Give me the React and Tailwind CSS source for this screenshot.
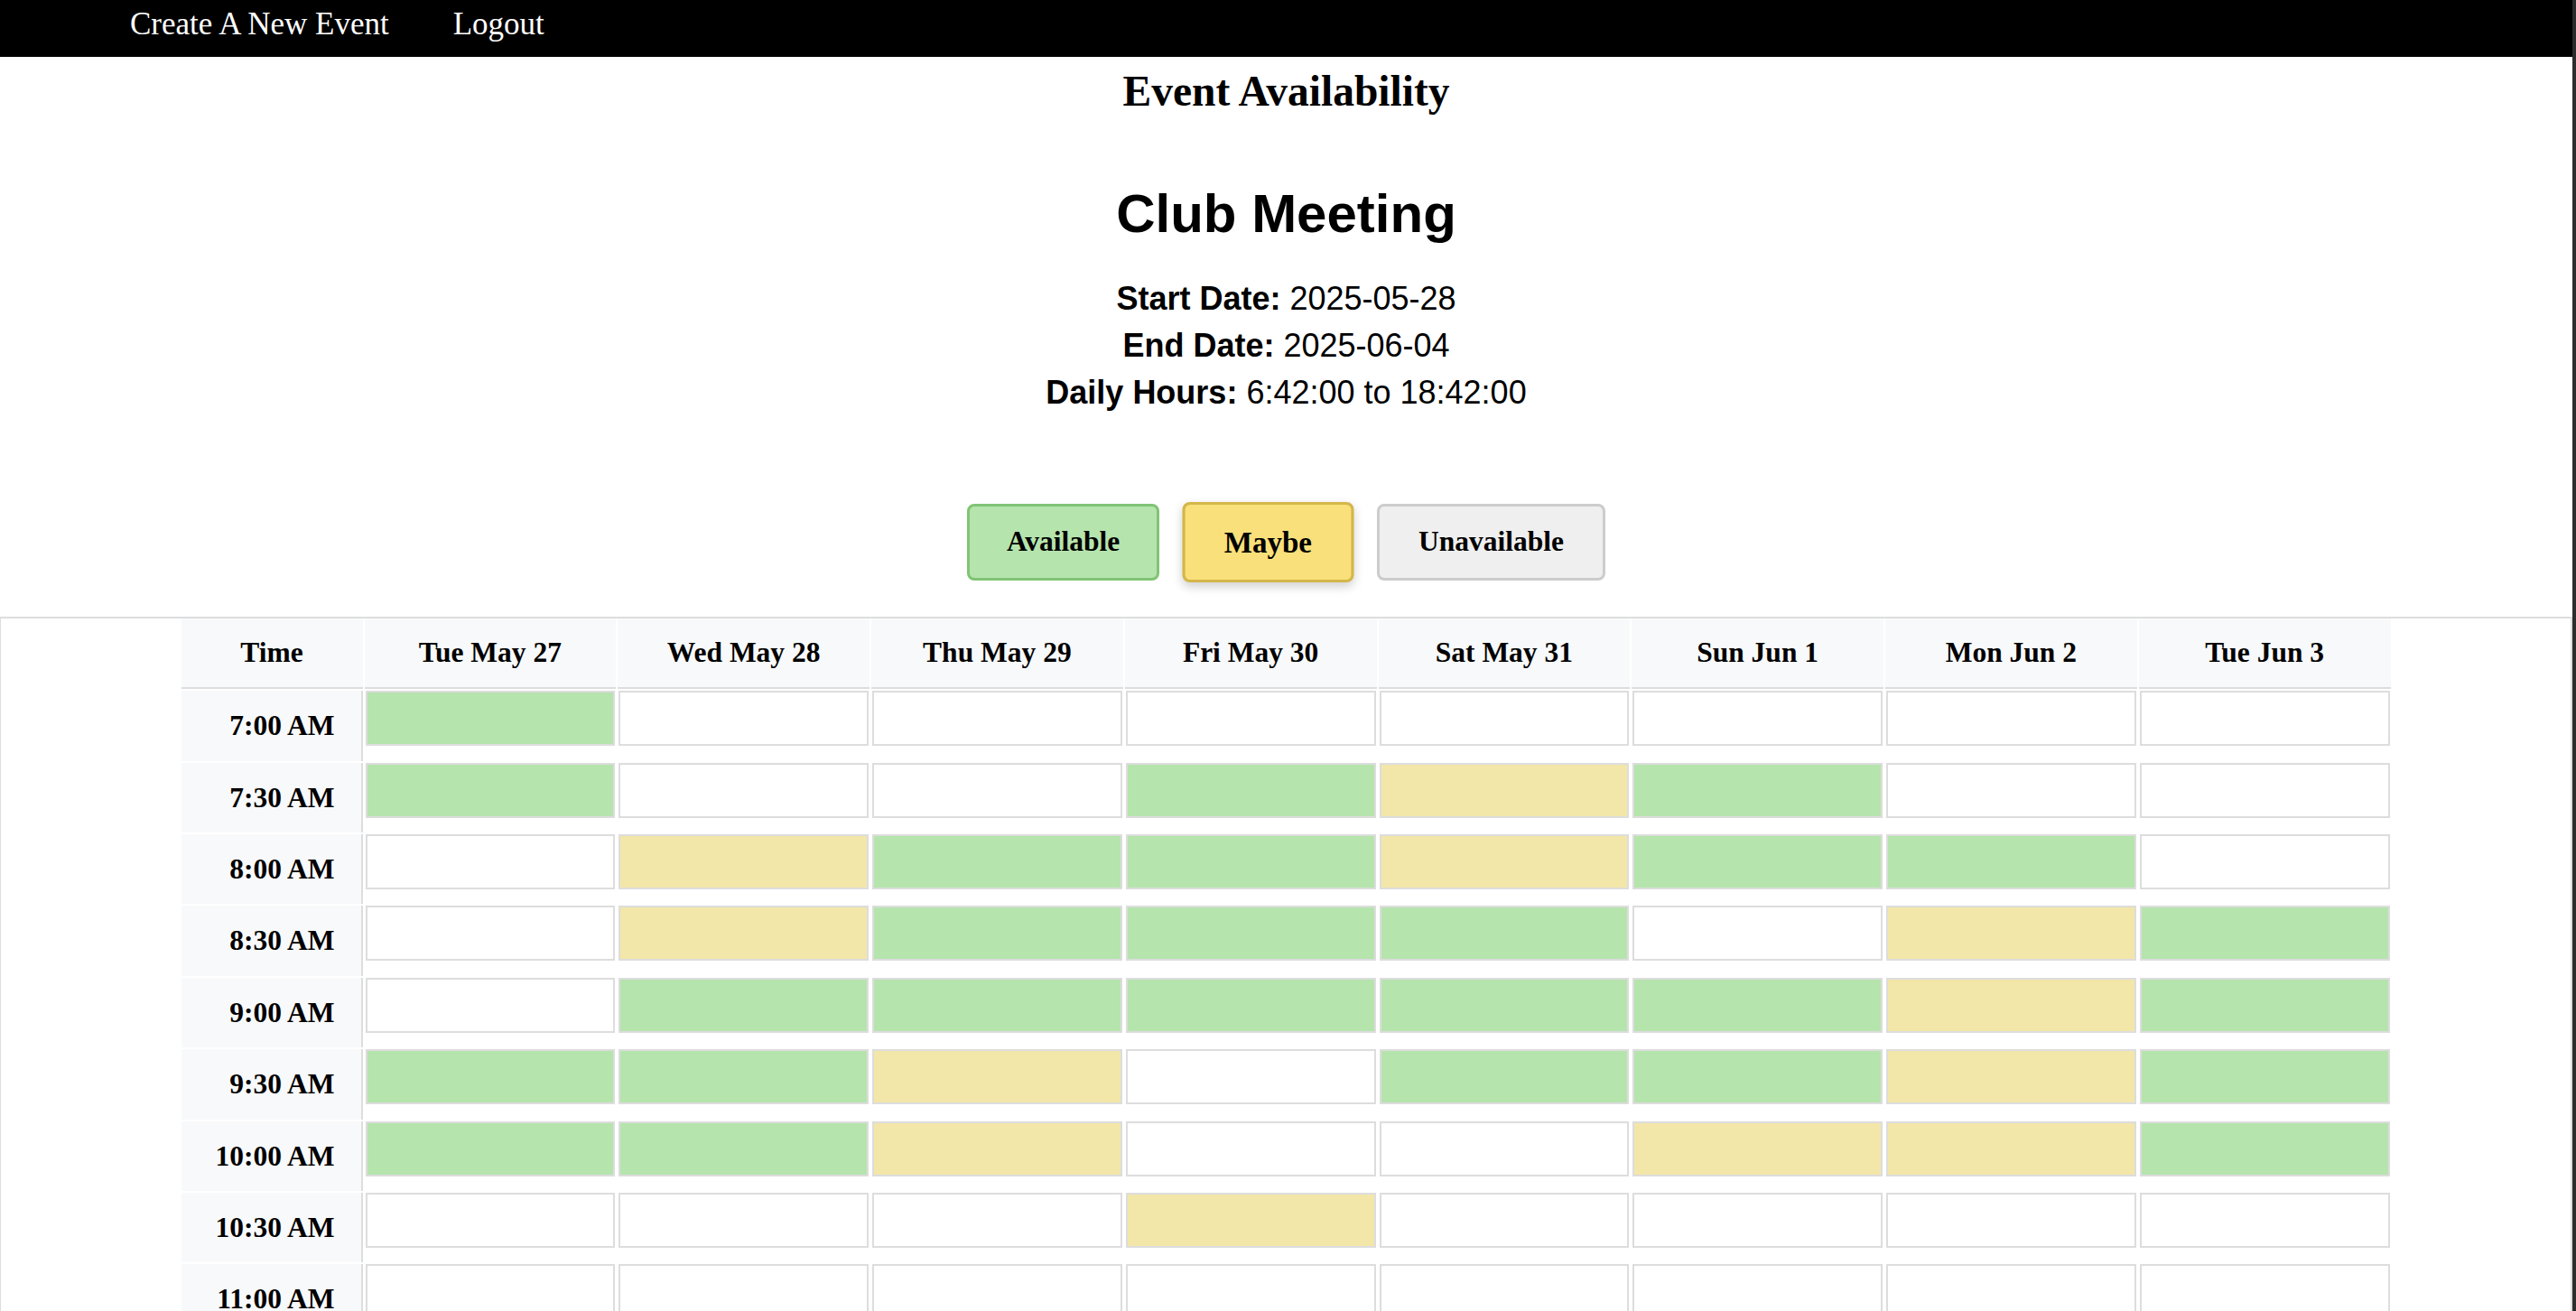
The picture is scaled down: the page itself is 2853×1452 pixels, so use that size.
import React from 'react'

const days = ['Tue May 27', 'Wed May 28', 'Thu May 29', 'Fri May 30', 'Sat May 31', 'Sun Jun 1', 'Mon Jun 2', 'Tue Jun 3']

// g = available, y = maybe, . = nothing yet
const grid = [
  'g.......',
  'g..gyg..',
  '.yggygg.',
  '.yggg.yg',
  '.gggggyg',
  'ggy.ggyg',
  'ggy..yyg',
  '...y....',
]

function timeLabel(i) {
  const mins = 7 * 60 + i * 30
  let h = Math.floor(mins / 60)
  const m = mins % 60
  const ampm = h >= 12 ? 'PM' : 'AM'
  if (h > 12) h -= 12
  return `${h}:${m === 0 ? '00' : '30'} ${ampm}`
}

const rows = Array.from({ length: 24 }, (_, i) => ({
  label: timeLabel(i),
  slots: (grid[i] || '........').split(''),
}))

function Slot({ state }) {
  const color =
    state === 'g' ? 'bg-[#b5e4ad]' : state === 'y' ? 'bg-[#f3e6a9]' : 'bg-white'
  return <div className={`mx-px h-[61px] border-2 border-[#dddddd] ${color}`} />
}

export default function App() {
  return (
    <div className="flex h-screen overflow-hidden bg-white text-black">
      <div className="min-w-0 flex-1">
        {/* Nav */}
        <nav className="flex h-[63px] gap-[71px] bg-black pl-[144px] pt-[9px] font-['Liberation_Serif',serif] text-[35px] leading-none text-white">
          <a href="#">Create A New Event</a>
          <a href="#">Logout</a>
        </nav>

        {/* Event info */}
        <div className="text-center">
          <h2 className="mt-[15px] font-['Liberation_Serif',serif] text-[47.5px] font-bold leading-none">
            Event Availability
          </h2>
          <h1 className="mt-[81px] font-['Liberation_Sans',Arial,sans-serif] text-[60px] font-bold leading-none">
            Club Meeting
          </h1>
          <div className="mt-[38.5px] font-['Liberation_Sans',Arial,sans-serif] text-[36px] leading-[52px]">
            <p><b>Start Date:</b> 2025-05-28</p>
            <p><b>End Date:</b> 2025-06-04</p>
            <p><b>Daily Hours:</b> 6:42:00 to 18:42:00</p>
          </div>
        </div>

        {/* Mode buttons */}
        <div className="mt-[96.5px] flex justify-center gap-[30px] font-['Liberation_Serif',serif] text-[31.5px] font-bold">
          <button className="flex h-[85px] items-center rounded-lg border-[3px] border-[#80c474] bg-[#b5e4ad] px-[41px]">
            Available
          </button>
          <button className="flex h-[85px] scale-105 items-center rounded-lg border-[3px] border-[#d4b64a] bg-[#f9e07a] px-[41px] shadow-[0_4px_10px_rgba(0,0,0,0.18)]">
            Maybe
          </button>
          <button className="flex h-[85px] items-center rounded-lg border-[3px] border-[#cccccc] bg-[#efefef] px-[43px]">
            Unavailable
          </button>
        </div>

        {/* Availability table */}
        <div className="mt-[40px] border-l border-r-2 border-t-2 border-[#dddddd] font-['Liberation_Serif',serif] text-[31.5px] font-bold">
          <div className="mx-auto grid w-[2447px] grid-cols-[201px_repeat(8,minmax(0,1fr))] gap-[2px]">
            <div className="flex h-[78.7px] items-center justify-center border-b-2 border-[#dddddd] bg-[#f8f9fa]">
              Time
            </div>
            {days.map((d) => (
              <div
                key={d}
                className="flex h-[78.7px] items-center justify-center border-b-2 border-[#dddddd] bg-[#f8f9fa]"
              >
                {d}
              </div>
            ))}

            {rows.map((r) => (
              <React.Fragment key={r.label}>
                <div className="flex h-[77.4px] items-center justify-end border-r-2 border-[#dddddd] bg-[#f8f9fa] pr-[29px]">
                  {r.label}
                </div>
                {r.slots.map((s, j) => (
                  <div key={j} className="h-[77.4px]">
                    <Slot state={s} />
                  </div>
                ))}
              </React.Fragment>
            ))}
          </div>
        </div>
      </div>
      <div className="w-[4px] shrink-0 bg-[#2d2d2d]" />
    </div>
  )
}
